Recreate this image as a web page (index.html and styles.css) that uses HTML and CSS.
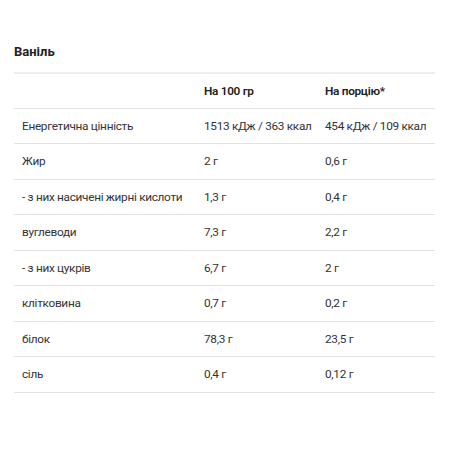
FILE: index.html
```html
<!DOCTYPE html>
<html lang="uk">
<head>
<meta charset="utf-8">
<link rel="stylesheet" href="styles.css">
</head>
<body>
<div class="panel">
  <h3 class="flavor">Ваніль</h3>
  <table class="nutrition">
    <thead>
      <tr><th></th><th>На 100 гр</th><th>На порцію*</th></tr>
    </thead>
    <tbody>
      <tr><td>Енергетична цінність</td><td>1513 кДж / 363 ккал</td><td>454 кДж / 109 ккал</td></tr>
      <tr><td>Жир</td><td>2 г</td><td>0,6 г</td></tr>
      <tr><td>- з них насичені жирні кислоти</td><td>1,3 г</td><td>0,4 г</td></tr>
      <tr><td>вуглеводи</td><td>7,3 г</td><td>2,2 г</td></tr>
      <tr><td>- з них цукрів</td><td>6,7 г</td><td>2 г</td></tr>
      <tr><td>клітковина</td><td>0,7 г</td><td>0,2 г</td></tr>
      <tr><td>білок</td><td>78,3 г</td><td>23,5 г</td></tr>
      <tr><td>сіль</td><td>0,4 г</td><td>0,12 г</td></tr>
    </tbody>
  </table>
</div>
</body>
</html>
```
FILE: styles.css
```css
html, body {
  margin: 0;
  padding: 0;
  background: #fff;
}
body {
  font-family: Roboto, "Noto Sans", sans-serif;
  color: #333;
}
.panel {
  padding: 43px 15px 0 14px;
}
.flavor {
  margin: 0 0 11px 0;
  font-size: 13px;
  font-weight: 700;
  line-height: 18px;
  color: #222;
}
.nutrition {
  width: 421px;
  table-layout: fixed;
  border-collapse: collapse;
  border-top: 2px solid #eee;
  font-size: 11.8px;
  letter-spacing: -0.3px;
}
.nutrition th,
.nutrition td {
  box-sizing: border-box;
  text-align: left;
  padding: 0 8px;
  height: 35.5px;
  border-bottom: 1px solid #e2e2e2;
  vertical-align: middle;
  white-space: nowrap;
}
.nutrition th {
  height: 35px;
  font-weight: 600;
  color: #222;
}
.nutrition th:nth-child(1) { width: 182px; }
.nutrition th:nth-child(2) { width: 121px; }
.nutrition th:nth-child(3) { width: 118px; }
```
